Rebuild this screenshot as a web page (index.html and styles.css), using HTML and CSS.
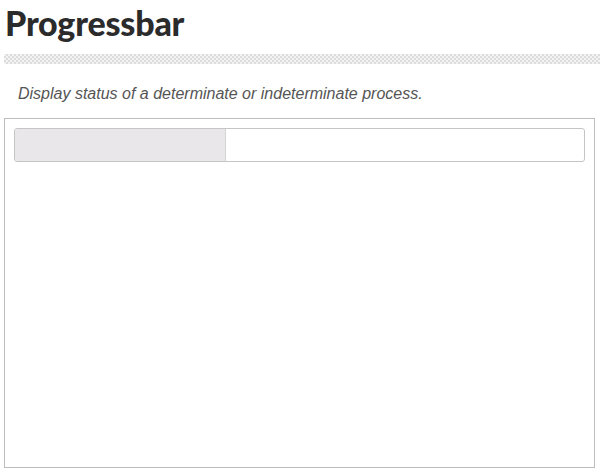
FILE: index.html
```html
<!doctype html>
<html>
<head>
<meta charset="utf-8" />
<title>Progressbar</title>
<link rel="stylesheet" href="styles.css">
</head>
<body>
	<div class="wrap">
		<h1 class="title">Progressbar</h1>
		<div class="hatch"></div>
		<p class="desc">Display status of a determinate or indeterminate process.</p>
		<div class="demo">
			<div class="progressbar">
				<div class="progressbar-value" style="width: 37%;"></div>
			</div>
		</div>
	</div>
</body>
</html>
```

FILE: styles.css
```css
html, body{margin: 0; padding: 0; background: #fff;}
.wrap{padding: 0 5px 0 4px;}
.title{margin: 0; padding: 3px 0 0 1px; height: 51px; box-sizing: border-box; font-family: Lato, "Liberation Sans", sans-serif; font-weight: 900; font-size: 34px; line-height: 40px; color: #2b2b2b; letter-spacing: -0.2px;}
.hatch{height: 10px; margin: 3px -5px 0 0; background: repeating-conic-gradient(#dcdcdc 0 25%, #f3f3f3 0 50%) 0 0/4px 4px;}
.desc{margin: 0; padding: 21px 0 0 14px; height: 54px; box-sizing: border-box; font-family: "Liberation Sans", Arial, sans-serif; font-style: italic; font-size: 16px; line-height: 18px; color: #555;}
.demo{height: 350px; box-sizing: border-box; border: 1px solid #bdbdbd; padding: 9px;}
.progressbar{height: 34px; box-sizing: border-box; border: 1px solid #c5c5c5; border-radius: 3px; background: #fff; overflow: hidden;}
.progressbar-value{height: 100%; box-sizing: border-box; background: #e9e7ea; border-right: 1px solid #d3d3d3;}
```
